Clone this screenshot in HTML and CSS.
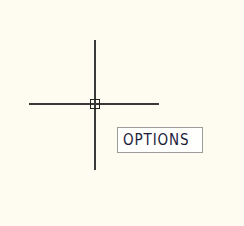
FILE: index.html
```html
<!DOCTYPE html>
<html>
<head>
<meta charset="utf-8">
<link rel="stylesheet" href="styles.css">
</head>
<body>
<div class="canvas">
  <svg class="cursor" width="244" height="226" viewBox="0 0 244 226">
    <line x1="95" y1="40" x2="95" y2="170" stroke="#3a3a3a" stroke-width="2"/>
    <line x1="29" y1="104" x2="159" y2="104" stroke="#3a3a3a" stroke-width="2"/>
    <rect x="90.5" y="99.5" width="9" height="9" fill="none" stroke="#222" stroke-width="1"/>
  </svg>
  <div class="tooltip">OPTIONS</div>
</div>
</body>
</html>
```
FILE: styles.css
```css
html, body {
  margin: 0;
  padding: 0;
  background: #fefcf1;
}
.canvas {
  position: relative;
  width: 244px;
  height: 226px;
  overflow: hidden;
}
.cursor {
  position: absolute;
  left: 0;
  top: 0;
  display: block;
}
.tooltip {
  position: absolute;
  left: 117px;
  top: 127px;
  width: 86px;
  height: 26px;
  box-sizing: border-box;
  border: 1px solid #9c9c9c;
  background: #fffffd;
  padding-left: 5px;
  display: flex;
  align-items: center;
  font-family: "DejaVu Sans Condensed", "DejaVu Sans", sans-serif;
  font-stretch: condensed;
  font-size: 15px;
  letter-spacing: 0.9px;
  color: #1c1c3a;
}
```
